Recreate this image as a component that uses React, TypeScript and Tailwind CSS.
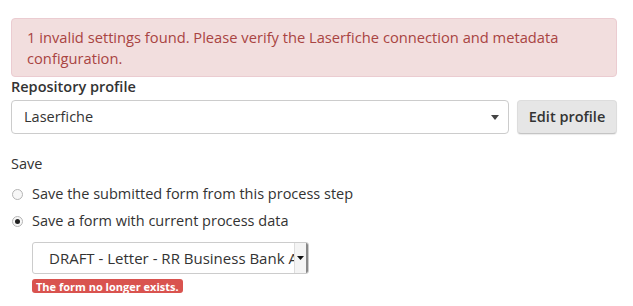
import React from 'react';

function Radio({ checked }: { checked?: boolean }) {
  return (
    <span className="flex h-[11px] w-[11px] shrink-0 items-center justify-center rounded-full border border-[#b5b5b5] bg-[#f7f7f7]">
      {checked && <span className="h-[5px] w-[5px] rounded-full bg-[#222]" />}
    </span>
  );
}

export default function App() {
  return (
    <div className="w-[633px] h-[306px] overflow-hidden bg-white font-['Open_Sans',sans-serif] text-[14.5px] text-[#333]">
      <div className="ml-[11px] w-[606px] pt-[18px]">
        <div className="rounded-[4px] border border-[#ebccd1] bg-[#f2dede] px-[15px] pt-[8px] pb-[7px] text-[14.7px] leading-[21px] text-[#a94442]">
          1 invalid settings found. Please verify the Laserfiche connection and metadata configuration.
        </div>

        <div className="font-semibold leading-[20px]">Repository profile</div>

        <div className="mt-[3px] flex gap-[8px]">
          <div className="flex h-[34px] w-[498px] items-center justify-between rounded-[4px] border border-[#ccc] bg-white pl-[12px] pr-[9px]">
            <span>Laserfiche</span>
            <svg width="8" height="5" viewBox="0 0 8 5">
              <path d="M0 0h8L4 5z" fill="#444" />
            </svg>
          </div>
          <button className="h-[34px] w-[100px] rounded-[4px] border border-[#ddd] border-b-[#c4c4c4] bg-[#e6e6e6] font-semibold text-[#333] shadow-[0_1px_1px_rgba(0,0,0,0.08)]">
            Edit profile
          </button>
        </div>

        <div className="mt-[19px] leading-[22px]">Save</div>

        <div className="mt-[8px] flex items-center gap-[9px] pl-[1px] leading-[22px]">
          <Radio />
          <span>Save the submitted form from this process step</span>
        </div>
        <div className="mt-[5px] flex items-center gap-[9px] pl-[1px] leading-[22px]">
          <Radio checked />
          <span>Save a form with current process data</span>
        </div>

        <div className="ml-[21px] mt-[10px] flex h-[32px] w-[277px] items-center overflow-hidden rounded-[3px] border border-[#ccc] bg-white">
          <span className="flex-1 overflow-hidden whitespace-nowrap pl-[16px] pr-[10px] text-[15px] text-[#333]">
            DRAFT - Letter - RR Business Bank Account
          </span>
          <span className="flex h-full w-[14px] shrink-0 items-center justify-center border-l border-[#ddd] border-r-2 border-r-[#888] bg-[#f4f4f4]">
            <svg width="7" height="4" viewBox="0 0 7 4">
              <path d="M0 0h7L3.5 4z" fill="#111" />
            </svg>
          </span>
        </div>

        <div className="ml-[21px] mt-[5px] inline-flex h-[14px] items-center rounded-[3px] bg-[#d9534f] px-[4px] text-[11px] font-bold leading-none text-white">
          The form no longer exists.
        </div>
      </div>
    </div>
  );
}
